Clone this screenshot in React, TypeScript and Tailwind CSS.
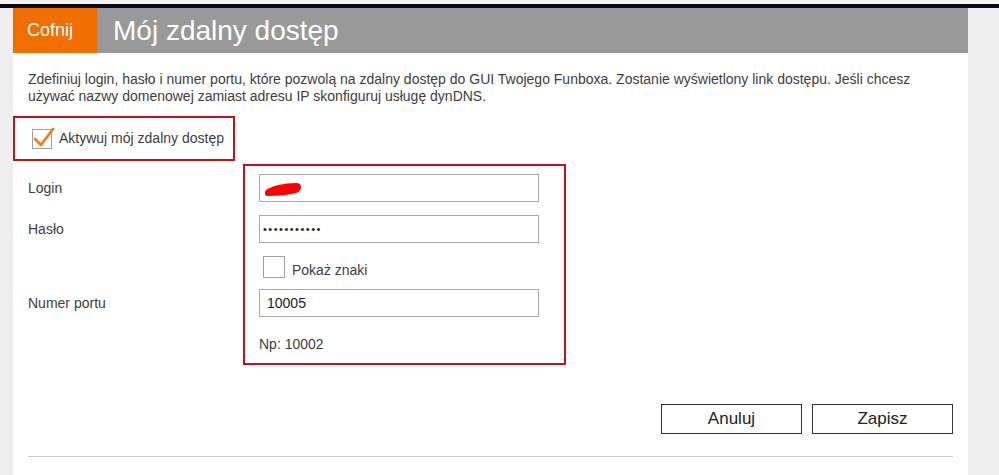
import React from "react";

export default function App() {
  const font = { fontFamily: '"Liberation Sans", Arial, sans-serif' };
  return (
    <div className="w-[999px] h-[475px] overflow-hidden bg-[#efefef] text-[#404040]" style={font}>
      <div className="h-[4px] bg-[#f4f4f4]" />
      <div className="h-[4px] bg-[#0c0c16]" />
      <div className="flex h-[467px]">
        <div className="w-[13px] bg-[#efefef]" />
        <div className="w-[955px] bg-white flex flex-col">
          <div className="flex h-[45px]">
            <div className="w-[84px] bg-[#f16e00] flex items-center pl-[14px] text-white text-[18px]">
              Cofnij
            </div>
            <div className="flex-1 bg-[#999999] flex items-center pl-[16px] text-white text-[28px] leading-none">
              Mój zdalny dostęp
            </div>
          </div>
          <p className="mt-[18px] px-[15px] text-[14px] leading-[17px] text-[#404040]">
            Zdefiniuj login, hasło i numer portu, które pozwolą na zdalny dostęp do GUI Twojego Funboxa. Zostanie wyświetlony link dostępu. Jeśli chcesz
            <br />
            używać nazwy domenowej zamiast adresu IP skonfiguruj usługę dynDNS.
          </p>
          <div className="mt-[11px] w-[222px] h-[45px] border-2 border-[#c0141b] flex items-center pl-[17px] gap-[7px]">
            <div className="relative w-[20px] h-[20px] border border-[#a0a0a0] bg-white">
              <svg className="absolute -left-[1px] -top-[5px]" width="24" height="24" viewBox="0 0 24 24">
                <path d="M3 14 L9 20 L21 4" fill="none" stroke="#f07c1e" strokeWidth="2.8" strokeLinecap="round" strokeLinejoin="round" />
              </svg>
            </div>
            <span className="text-[14px] text-[#404040]">Aktywuj mój zdalny dostęp</span>
          </div>
          <div className="flex mt-[3px]">
            <div className="w-[230px] pl-[15px] pt-[10px] flex flex-col text-[14px] text-[#404040]">
              <div className="h-[28px] flex items-center">Login</div>
              <div className="h-[28px] mt-[13px] flex items-center">Hasło</div>
              <div className="h-[28px] mt-[46px] flex items-center">Numer portu</div>
            </div>
            <div className="w-[323px] h-[201px] border-2 border-[#c0141b] pl-[14px] pt-[8px] flex flex-col">
              <div className="relative w-[280px] h-[28px] border border-[#aaaaaa] bg-white">
                <svg className="absolute left-[2px] top-[5px]" width="42" height="18" viewBox="0 0 42 18">
                  <path d="M5 12 C 10 8, 22 5, 34 5 C 38 5, 38 9, 34 11 C 26 13, 14 14, 5 14 Z" fill="#ff0000" stroke="#ff0000" strokeWidth="4" strokeLinejoin="round" />
                </svg>
              </div>
              <div className="mt-[13px] w-[280px] h-[28px] border border-[#aaaaaa] bg-white flex items-center pl-[3px] text-[11px] tracking-[1.5px] text-[#222]">
                •••••••••••
              </div>
              <div className="mt-[13px] h-[22px] flex items-center gap-[7px] pl-[4px]">
                <div className="w-[22px] h-[22px] border border-[#a0a0a0] bg-white" />
                <span className="text-[14px] text-[#404040] mt-[7px]">Pokaż znaki</span>
              </div>
              <div className="mt-[11px] w-[280px] h-[28px] border border-[#aaaaaa] bg-white flex items-center pl-[7px] text-[14px] text-[#222]">
                10005
              </div>
              <div className="mt-[19px] text-[14px] text-[#404040] leading-[17px]">Np: 10002</div>
            </div>
          </div>
          <div className="mt-[39px] flex justify-end gap-[10px] pr-[15px]">
            <button className="w-[141px] h-[30px] border border-[#333] bg-white text-[17px] text-[#222]" style={font}>
              Anuluj
            </button>
            <button className="w-[141px] h-[30px] border border-[#333] bg-white text-[17px] text-[#222]" style={font}>
              Zapisz
            </button>
          </div>
          <div className="mt-[22px] mx-[15px] h-[1px] bg-[#cccccc]" />
        </div>
        <div className="flex-1 bg-[#efefef]" />
      </div>
    </div>
  );
}
